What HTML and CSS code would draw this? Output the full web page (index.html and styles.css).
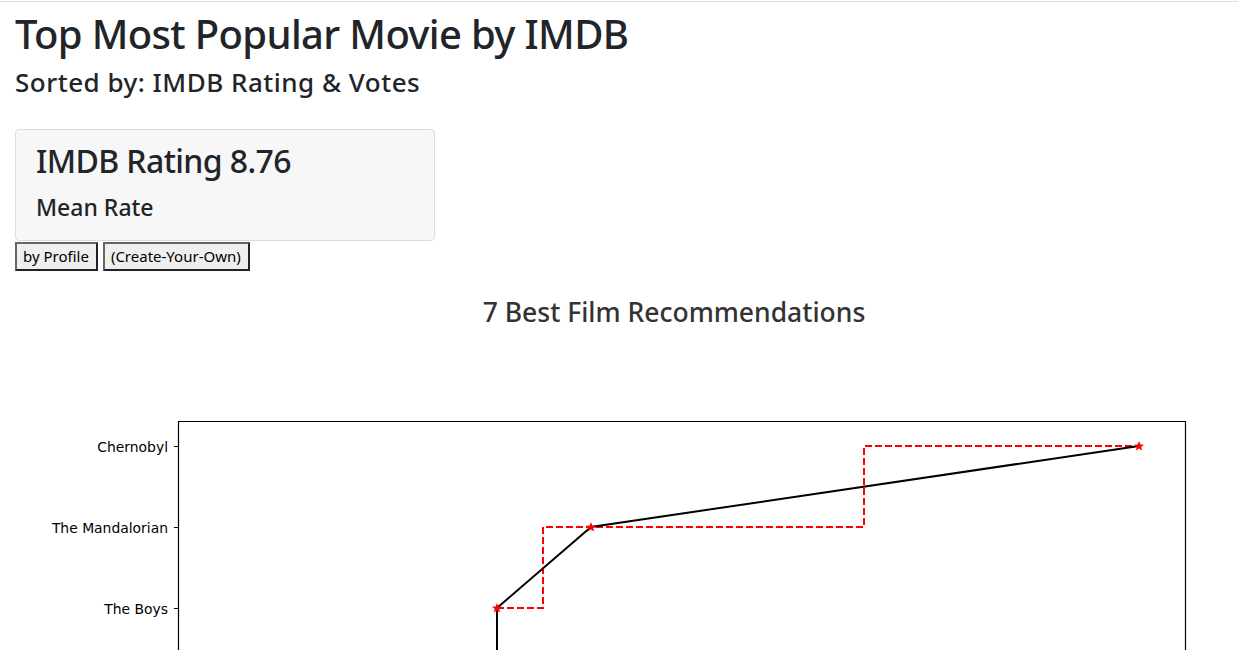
FILE: index.html
```html
<!DOCTYPE html>
<html lang="en">
<head>
<meta charset="utf-8">
<title>Top Most Popular Movie by IMDB</title>
<link rel="stylesheet" href="styles.css">
</head>
<body>
<div class="topline"></div>
<main class="page">
  <h1 class="title">Top Most Popular Movie by IMDB</h1>
  <h4 class="subtitle">Sorted by: IMDB Rating &amp; Votes</h4>
  <section class="card">
    <h2 class="card-title">IMDB Rating 8.76</h2>
    <h4 class="card-sub">Mean Rate</h4>
  </section>
  <div class="btns">
    <button class="btn" type="button">by Profile</button>
    <button class="btn" type="button">(Create-Your-Own)</button>
  </div>
  <h3 class="section-title">7 Best Film Recommendations</h3>
  <svg class="chart" width="1238" height="300" viewBox="0 0 1238 300" xmlns="http://www.w3.org/2000/svg">
    <g fill="none" stroke="#000" stroke-width="1.2">
      <path d="M178.5 310 V71.5 H1185.5 V310"/>
      <path d="M174 96.5 H178 M174 177.5 H178 M174 258.5 H178"/>
    </g>
    <g class="ticklabels" font-family="'DejaVu Sans', sans-serif" font-size="13.9" fill="#000" text-anchor="end">
      <text x="168" y="101.5">Chernobyl</text>
      <text x="168" y="182.5">The Mandalorian</text>
      <text x="168" y="263.5">The Boys</text>
    </g>
    <path d="M497 258 H543 V177 H864 V96 H1139" fill="none" stroke="#ff0000" stroke-width="2" stroke-dasharray="7 3"/>
    <path d="M497 310 V258 L591 177 L1139 96" fill="none" stroke="#000" stroke-width="2" stroke-linejoin="miter"/>
    <g fill="#ff0000">
      <path d="M497 253 L498.4 256.6 L502 256.8 L499.2 259.1 L500.2 262.6 L497 260.6 L493.8 262.6 L494.8 259.1 L492 256.8 L495.6 256.6 Z"/>
      <path d="M591 172 L592.4 175.6 L596 175.8 L593.2 178.1 L594.2 181.6 L591 179.6 L587.8 181.6 L588.8 178.1 L586 175.8 L589.6 175.6 Z"/>
      <path d="M1139 91 L1140.4 94.6 L1144 94.8 L1141.2 97.1 L1142.2 100.6 L1139 98.6 L1135.8 100.6 L1136.8 97.1 L1134 94.8 L1137.6 94.6 Z"/>
    </g>
  </svg>
</main>
</body>
</html>
```
FILE: styles.css
```css
html, body {
  margin: 0;
  padding: 0;
  background: #fff;
}
body {
  font-family: "Noto Sans", "Open Sans", sans-serif;
  color: #212529;
  overflow: hidden;
}
.topline {
  margin-top: 1px;
  border-top: 1px solid #dcdcdc;
}
.page {
  padding: 0 15px;
}
.title {
  margin: 8px 0 0;
  font-size: 40px;
  line-height: 48px;
  font-weight: 500;
  letter-spacing: -0.65px;
}
.subtitle {
  margin: 10px 0 0;
  font-size: 26px;
  line-height: 29px;
  font-weight: 500;
  letter-spacing: 0.5px;
}
.card {
  margin-top: 32px;
  width: 420px;
  background: #f7f7f7;
  border: 1px solid #dddddd;
  border-radius: 4px;
  padding: 10px 0 18px 20px;
  box-sizing: border-box;
}
.card-title {
  margin: 0;
  font-size: 32px;
  line-height: 42px;
  font-weight: 500;
  letter-spacing: -0.6px;
}
.card-sub {
  margin: 11px 0 0;
  font-size: 23px;
  line-height: 29px;
  font-weight: 500;
}
.btns {
  display: flex;
  gap: 5px;
  margin-top: 1px;
}
.btn {
  font-family: "Noto Sans", "Open Sans", sans-serif;
  font-size: 15px;
  line-height: 21px;
  color: #000;
  background: #efefef;
  border: 2px solid;
  border-color: #666 #222 #222 #666;
  border-radius: 0;
  padding: 2px 7px 2px 6px;
  height: 29px;
}
.section-title {
  margin: 24px 0 0;
  padding-left: 110px;
  text-align: center;
  font-size: 26.5px;
  line-height: 34px;
  font-weight: 500;
  color: #333;
}
.chart {
  display: block;
  margin: 21px 0 0 -15px;
}
```
